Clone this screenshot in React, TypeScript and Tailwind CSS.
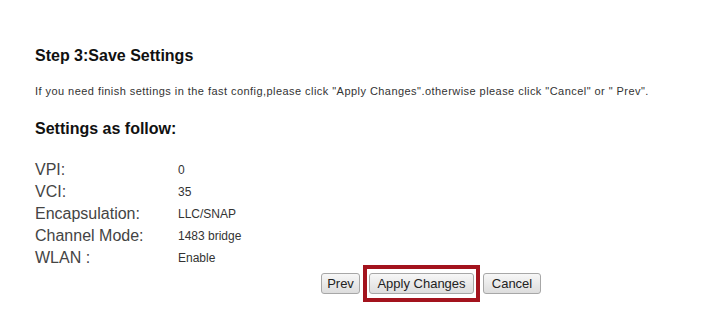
import React from 'react'

const rows: [string, string][] = [
  ['VPI:', '0'],
  ['VCI:', '35'],
  ['Encapsulation:', 'LLC/SNAP'],
  ['Channel Mode:', '1483 bridge'],
  ['WLAN :', 'Enable'],
]

const btn =
  'h-[21px] rounded-[3px] border border-[#a7a7a7] bg-gradient-to-b from-[#f7f7f7] to-[#dddddd] text-[13px] leading-[19px] text-[#222]'

export default function App() {
  return (
    <div className="h-[312px] w-[705px] overflow-hidden bg-white font-['Liberation_Sans',Arial,sans-serif]">
      <div className="pl-[35px]">
        <h1 className="mt-[46px] text-[16px] font-bold leading-[20px] text-[#111]">Step 3:Save Settings</h1>
        <p className="mt-[15px] text-[11px] leading-[20px] tracking-[0.45px] text-[#333]">
          If you need finish settings in the fast config,please click "Apply Changes".otherwise please click "Cancel" or " Prev".
        </p>
        <h2 className="mt-[18px] text-[16px] font-bold leading-[20px] text-[#111]">Settings as follow:</h2>

        <div className="mt-[20px]">
          {rows.map(([label, value]) => (
            <div key={label} className="flex">
              <span className="w-[143px] text-[16px] leading-[22px] text-[#444]">{label}</span>
              <span className="text-[12px] leading-[22px] text-[#333]">{value}</span>
            </div>
          ))}
        </div>
      </div>

      <div className="-mt-[4px] ml-[321px] flex items-center gap-[3px]">
        <button className={`${btn} w-[39px]`}>Prev</button>
        <div className="border-[4px] border-[#a3131d] px-[2px] py-[4px]">
          <button className={`${btn} block w-[105px]`}>Apply Changes</button>
        </div>
        <button className={`${btn} w-[58px]`}>Cancel</button>
      </div>
    </div>
  )
}
